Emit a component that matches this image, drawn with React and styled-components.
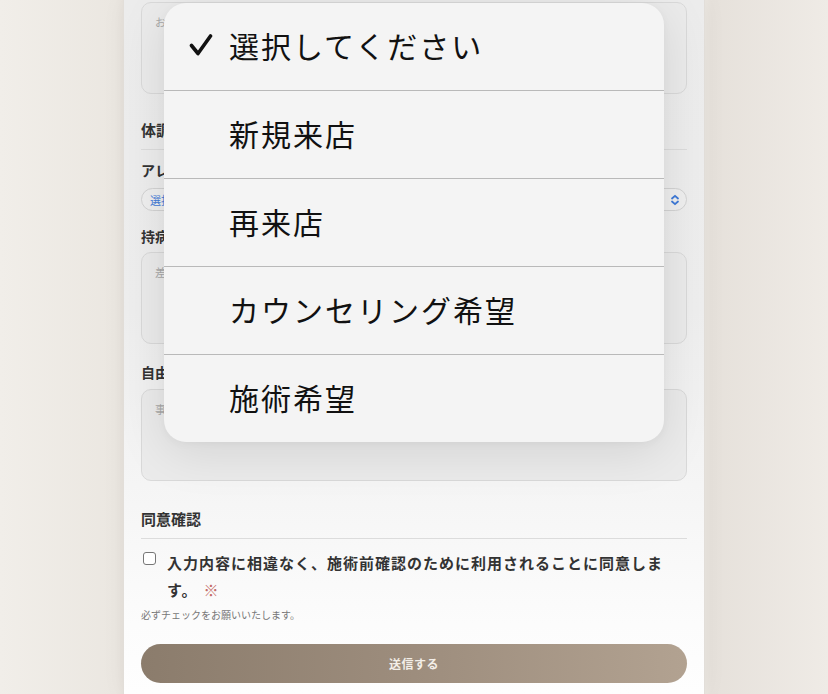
import React from 'react';
import styled, { createGlobalStyle } from 'styled-components';

const GlobalStyle = createGlobalStyle`
  html, body {
    margin: 0;
    padding: 0;
    height: 100%;
    overflow: hidden;
  }
  body {
    font-family: "Noto Sans CJK JP", "Noto Sans", sans-serif;
    color: #333;
  }
`;

const Page = styled.div`
  position: relative;
  height: 694px;
  display: flex;
  justify-content: center;
  background: linear-gradient(90deg, #f1eee9 0%, #ebe7e1 14%, #e7e2dc 15%, #ebe7e1 85%, #e6e1db 86%, #efebe6 100%);
  overflow: hidden;
`;

const Card = styled.div`
  width: 546px;
  padding: 2px 17px 0;
  background: linear-gradient(180deg, #ececec 0%, #eeeeee 45%, #f5f5f5 70%, #fcfcfc 90%, #fefefe 100%);
  box-shadow: 0 0 0 1px #e2ded9, 0 0 24px rgba(0, 0, 0, 0.05);
  display: flex;
  flex-direction: column;
`;

const TextArea = styled.div`
  height: 92px;
  box-sizing: border-box;
  border: 1px solid #d9d9d9;
  border-radius: 10px;
  background: #ebebeb;
  padding: 11px 13px;
  font-size: 11px;
  color: #a8a8a8;
`;

const SectionTitle = styled.h2`
  margin: ${p => p.$top}px 0 0;
  font-size: 15px;
  line-height: 22px;
  font-weight: 700;
  color: #333;
  padding-bottom: 8px;
  border-bottom: 1px solid #dcdcdc;
`;

const Field = styled.div`
  display: flex;
  flex-direction: column;
  gap: ${p => p.$gap}px;
  margin-top: ${p => p.$top}px;
`;

const Label = styled.label`
  font-size: 14px;
  line-height: 20px;
  font-weight: 700;
  color: #333;
`;

const Select = styled.div`
  height: 23px;
  box-sizing: border-box;
  border: 1px solid #d3d3d3;
  border-radius: 12px;
  background: #efefef;
  display: flex;
  align-items: center;
  justify-content: space-between;
  padding: 0 6px 0 8px;
  font-size: 11px;
  color: #3f7ad8;
`;

const ConsentRow = styled.div`
  display: flex;
  align-items: flex-start;
  gap: 11px;
  margin-top: 10px;
`;

const Check = styled.span`
  flex: none;
  width: 13px;
  height: 13px;
  box-sizing: border-box;
  margin: 3px 0 0 2px;
  border: 1.5px solid #777;
  border-radius: 3px;
  background: #fff;
`;

const ConsentText = styled.p`
  margin: 0;
  max-width: 500px;
  font-size: 15px;
  letter-spacing: 1px;
  line-height: 27px;
  font-weight: 700;
  color: #333;
`;

const Mark = styled.span`
  color: #c46a66;
  font-weight: 400;
  margin-left: 6px;
`;

const Note = styled.p`
  margin: 5px 0 0;
  font-size: 10px;
  line-height: 14px;
  color: #777;
`;

const SubmitButton = styled.button`
  margin-top: 22px;
  height: 39px;
  border: none;
  border-radius: 20px;
  background: linear-gradient(90deg, #8b7c6c 0%, #9d8d7d 50%, #b2a291 100%);
  color: #f3eee8;
  font-family: inherit;
  font-size: 12px;
  font-weight: 700;
  letter-spacing: 0.5px;
`;

const Popup = styled.ul`
  position: absolute;
  left: 164px;
  top: 3px;
  width: 500px;
  margin: 0;
  padding: 0;
  list-style: none;
  background: #f4f4f4;
  border-radius: 22px;
  overflow: hidden;
  box-shadow: 0 10px 50px rgba(0, 0, 0, 0.1), 0 2px 8px rgba(0, 0, 0, 0.04);
`;

const Option = styled.li`
  height: ${p => (p.$first ? 87 : 88)}px;
  display: flex;
  align-items: center;
  padding: 0 0 4px 25px;
  border-top: ${p => (p.$first ? 'none' : '1px solid #b9b9b9')};
  box-sizing: border-box;
  font-size: 30px;
  letter-spacing: 2px;
  color: #111;
`;

const CheckSlot = styled.span`
  width: 40px;
  flex: none;
  display: flex;
  align-items: center;
`;

const CheckIcon = () => (
  <svg width="24" height="24" viewBox="0 0 24 24">
    <path d="M2.5 12.5 L9 20.5 L21.5 3" fill="none" stroke="#111" strokeWidth="3.6" strokeLinecap="round" strokeLinejoin="round" />
  </svg>
);

const UpDownIcon = () => (
  <svg width="10" height="12" viewBox="0 0 10 12">
    <path d="M2 4.5 L5 1.8 L8 4.5 M2 7.5 L5 10.2 L8 7.5" fill="none" stroke="#3f7ad8" strokeWidth="1.8" strokeLinecap="round" strokeLinejoin="round" />
  </svg>
);

const options = ['選択してください', '新規来店', '再来店', 'カウンセリング希望', '施術希望'];

const App = () => {
  return (
    <Page>
      <GlobalStyle />
      <Card>
        <TextArea>お悩みやご要望をご記入ください</TextArea>

        <SectionTitle $top={25}>体調・健康状態</SectionTitle>

        <Field $top={10} $gap={8}>
          <Label>アレルギー</Label>
          <Select>
            <span>選択してください</span>
            <UpDownIcon />
          </Select>
        </Field>

        <Field $top={15} $gap={6}>
          <Label>持病・服用中のお薬</Label>
          <TextArea>差し支えなければご記入ください</TextArea>
        </Field>

        <Field $top={18} $gap={7}>
          <Label>自由記入欄</Label>
          <TextArea>事前に伝えたいことがあればご記入ください</TextArea>
        </Field>

        <SectionTitle $top={27}>同意確認</SectionTitle>

        <ConsentRow>
          <Check />
          <ConsentText>
            入力内容に相違なく、施術前確認のために利用されることに同意します。
            <Mark>※</Mark>
          </ConsentText>
        </ConsentRow>
        <Note>必ずチェックをお願いいたします。</Note>

        <SubmitButton>送信する</SubmitButton>
      </Card>

      <Popup>
        {options.map((label, i) => (
          <Option key={label} $first={i === 0}>
            <CheckSlot>{i === 0 && <CheckIcon />}</CheckSlot>
            {label}
          </Option>
        ))}
      </Popup>
    </Page>
  );
};

export default App;
